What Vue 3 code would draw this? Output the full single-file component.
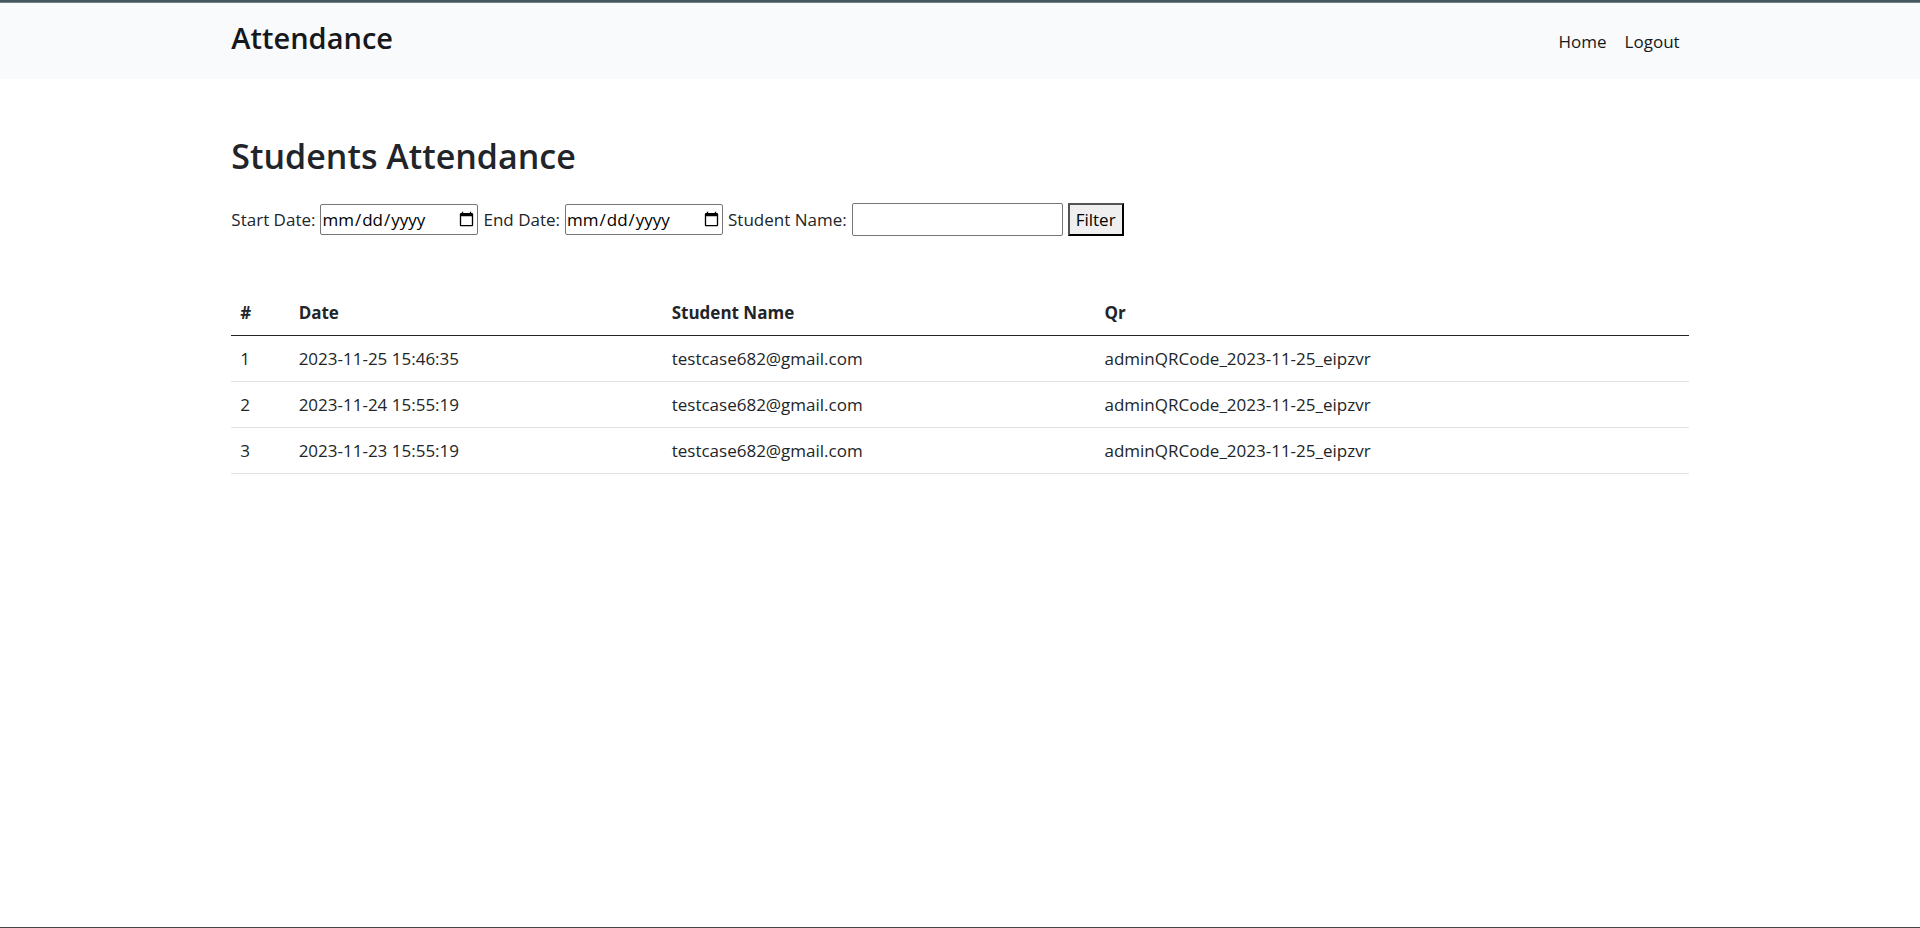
<script setup>
import { ref } from 'vue'

const startDate = ref('')
const endDate = ref('')
const studentName = ref('')

const records = [
  { id: 1, date: '2023-11-25 15:46:35', student: 'testcase682@gmail.com', qr: 'adminQRCode_2023-11-25_eipzvr' },
  { id: 2, date: '2023-11-24 15:55:19', student: 'testcase682@gmail.com', qr: 'adminQRCode_2023-11-25_eipzvr' },
  { id: 3, date: '2023-11-23 15:55:19', student: 'testcase682@gmail.com', qr: 'adminQRCode_2023-11-25_eipzvr' },
]
</script>

<template>
  <div class="page">
    <header class="topbar">
      <div class="container topbar-inner">
        <h2 class="brand">Attendance</h2>
        <nav class="nav">
          <a href="#">Home</a>
          <a href="#">Logout</a>
        </nav>
      </div>
    </header>

    <main class="container content">
      <h1 class="title">Students Attendance</h1>

      <form class="filters" @submit.prevent>
        <label for="start">Start Date:</label>
        <input id="start" v-model="startDate" type="date" />
        <label for="end">End Date:</label>
        <input id="end" v-model="endDate" type="date" />
        <label for="student">Student Name:</label>
        <input id="student" v-model="studentName" type="text" />
        <button type="submit">Filter</button>
      </form>

      <table class="table">
        <thead>
          <tr>
            <th class="col-id" scope="col">#</th>
            <th class="col-date" scope="col">Date</th>
            <th class="col-student" scope="col">Student Name</th>
            <th scope="col">Qr</th>
          </tr>
        </thead>
        <tbody>
          <tr v-for="record in records" :key="record.id">
            <td>{{ record.id }}</td>
            <td>{{ record.date }}</td>
            <td>{{ record.student }}</td>
            <td>{{ record.qr }}</td>
          </tr>
        </tbody>
      </table>
    </main>
  </div>
</template>

<style>
body {
  margin: 0;
  background: #fff;
}
</style>

<style scoped>
.page {
  box-sizing: border-box;
  min-height: 100vh;
  border-bottom: 1px solid #444;
  color: #212529;
  font-family: "Segoe UI", "Open Sans", "Noto Sans", sans-serif;
  font-size: 17px;
  font-weight: 400;
  line-height: 29px;
}

.container {
  box-sizing: border-box;
  width: 75.9%;
  margin: 0 auto;
}

.topbar {
  border-top: 2px solid #48565f;
  background: #f8fafc;
  box-shadow: inset 0 1px #71827f;
}

.topbar-inner {
  display: flex;
  justify-content: space-between;
  align-items: flex-start;
  padding: 16px 0 21px;
}

.brand,
.title {
  margin: 0;
  font-weight: 600;
  line-height: 40px;
}

.brand {
  color: #16181b;
  font-size: 29px;
}

.nav {
  display: flex;
  gap: 18px;
  padding: 9px 9px 0 0;
}

.nav a {
  color: #16181b;
  text-decoration: none;
}

.content {
  padding-top: 57px;
}

.title {
  font-size: 34px;
}

.filters {
  display: flex;
  flex-wrap: wrap;
  align-items: center;
  gap: 5px;
  margin-top: 27px;
}

.filters input,
.filters button {
  box-sizing: border-box;
  height: 33px;
  margin: 0;
  color: #000;
  font: inherit;
}

.filters input {
  padding: 1px 2px;
  border: 1px solid #767676;
  border-radius: 2px;
  background: #fff;
}

.filters input[type="date"] {
  width: 158px;
  height: 31px;
  padding: 1px 0;
}

.filters input[type="text"] {
  width: 211px;
}

.filters button {
  padding: 0 6px;
  border: 2px outset #000;
  background: #efefef;
}

.table {
  width: 100%;
  margin-top: 54px;
  border-collapse: collapse;
  table-layout: fixed;
}

.table th,
.table td {
  box-sizing: border-box;
  padding: 8px 9px;
  border-bottom: 1px solid #dee2e6;
  text-align: left;
}

.table th {
  border-bottom-color: #212529;
  font-weight: 700;
}

.col-id {
  width: 4%;
}

.col-date {
  width: 25.6%;
}

.col-student {
  width: 29.7%;
}
</style>
